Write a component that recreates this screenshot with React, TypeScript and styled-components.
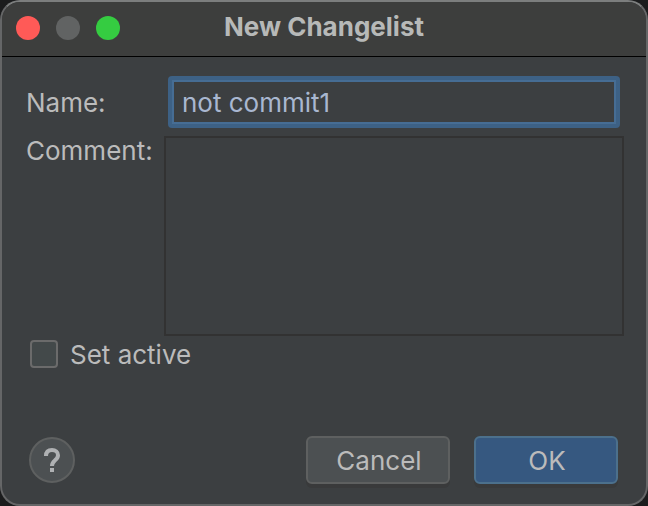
import React, { useState } from "react";
import styled, { createGlobalStyle } from "styled-components";

const GlobalStyle = createGlobalStyle`
  *, *::before, *::after { box-sizing: border-box; }
  body {
    margin: 0;
    background: #1b1c1d;
    font-family: Inter, "Liberation Sans", sans-serif;
    font-size: 26px;
    line-height: 32px;
    color: #bbbbbb;
  }
  button, input, textarea { font: inherit; color: inherit; margin: 0; }
`;

const Dialog = styled.form`
  display: flex;
  flex-direction: column;
  min-height: 100vh;
  border: 2px solid #656667;
  border-top-color: #7c7e7e;
  border-radius: 20px;
  background: #3c3f41;
  overflow: hidden;
`;

const TitleBar = styled.header`
  display: grid;
  grid-template-columns: 1fr auto 1fr;
  align-items: center;
  height: 55px;
  padding: 0 14px 3px;
  background: #3d3e3d;
  border-bottom: 1px solid #000000;
`;

const Lights = styled.div`
  display: flex;
  gap: 16px;
`;

const Light = styled.button<{ $color: string }>`
  width: 24px;
  height: 24px;
  padding: 0;
  border: 0;
  border-radius: 50%;
  background: ${(p) => p.$color};
`;

const Title = styled.h1`
  margin: 0;
  padding-bottom: 2px;
  font-size: 26px;
  font-weight: 700;
  line-height: 32px;
  color: #b7b9b8;
`;

const Content = styled.main`
  display: flex;
  flex: 1;
  flex-direction: column;
  padding: 19px 22px 20px 24px;
`;

const Fields = styled.div`
  display: grid;
  grid-template-columns: 138px 1fr;
  row-gap: 8px;
`;

const Label = styled.label`
  padding-top: 11px;
`;

const CommentLabel = styled.label`
  line-height: 30px;
`;

const NameInput = styled.input`
  min-width: 0;
  height: 44px;
  margin: 4px 8px;
  padding: 0 8px;
  border: 2px solid #466d94;
  border-radius: 0;
  outline: 0;
  box-shadow: 0 0 0 4px #3d6185;
  background: #3c3f41;
  color: #a9b7d0;
  clip-path: inset(-4px round 4px);
`;

const CommentInput = styled.textarea`
  display: block;
  min-width: 0;
  height: 200px;
  padding: 6px 12px;
  border: 2px solid #323232;
  border-radius: 0;
  outline: 0;
  resize: none;
  background: #3c3f41;
`;

const CheckRow = styled.label`
  display: flex;
  align-items: flex-start;
  align-self: flex-start;
  gap: 12px;
  margin: 4px 0 0 4px;
  line-height: 30px;
`;

const Checkbox = styled.input`
  appearance: none;
  width: 28px;
  height: 28px;
  border: 2px solid #6b6b6b;
  border-radius: 4px;
  background: #43494a;

  &:checked { background: #365880; }
`;

const Footer = styled.footer`
  display: flex;
  align-items: center;
  gap: 24px;
  margin-top: auto;
  padding: 0 6px 0 3px;
`;

const HelpButton = styled.button`
  display: grid;
  place-items: center;
  width: 46px;
  height: 46px;
  margin-right: auto;
  padding: 0;
  border: 2px solid #5e6060;
  border-radius: 50%;
  background: #4c5052;
`;

const ActionButton = styled.button<{ $primary?: boolean }>`
  width: 144px;
  height: 48px;
  padding: 2px 0 0 2px;
  border: 2px solid ${(p) => (p.$primary ? "#4c708c" : "#5e6060")};
  border-radius: 6px;
  background: ${(p) => (p.$primary ? "#365880" : "#4c5052")};
  box-shadow: 0 4px 0 rgba(54, 54, 54, 0.5);
`;

export default function App() {
  const [name, setName] = useState("not commit1");
  const [comment, setComment] = useState("");
  const [active, setActive] = useState(false);

  return (
    <>
      <GlobalStyle />
      <Dialog onSubmit={(e) => e.preventDefault()}>
        <TitleBar>
          <Lights>
            <Light type="button" aria-label="Close" $color="#ff5a57" />
            <Light type="button" aria-label="Minimize" disabled $color="#616363" />
            <Light type="button" aria-label="Zoom" $color="#35cc41" />
          </Lights>
          <Title>New Changelist</Title>
        </TitleBar>
        <Content>
          <Fields>
            <Label htmlFor="name">Name:</Label>
            <NameInput id="name" value={name} onChange={(e) => setName(e.target.value)} />
            <CommentLabel htmlFor="comment">Comment:</CommentLabel>
            <CommentInput
              id="comment"
              value={comment}
              onChange={(e) => setComment(e.target.value)}
            />
          </Fields>
          <CheckRow>
            <Checkbox
              type="checkbox"
              checked={active}
              onChange={(e) => setActive(e.target.checked)}
            />
            Set active
          </CheckRow>
          <Footer>
            <HelpButton type="button" aria-label="Help">
              <svg width="18" height="26" viewBox="0 0 18 26" aria-hidden="true">
                <path
                  d="M3 9C3 5 5.4 3 9 3s6 2 6 5.2c0 2.6-1.4 3.8-3 5.2-1.7 1.4-3 2.4-3 5.6"
                  fill="none"
                  stroke="#afb1b3"
                  strokeWidth="4"
                />
                <path d="M7 21h4v4H7z" fill="#afb1b3" />
              </svg>
            </HelpButton>
            <ActionButton type="button">Cancel</ActionButton>
            <ActionButton type="submit" $primary>
              OK
            </ActionButton>
          </Footer>
        </Content>
      </Dialog>
    </>
  );
}
